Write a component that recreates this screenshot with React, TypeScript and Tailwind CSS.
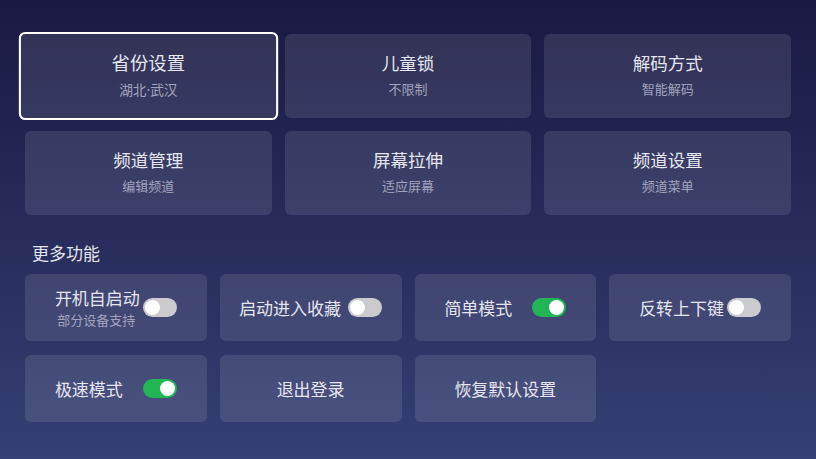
const topCards = [
  { title: "省份设置", sub: ["湖北", "武汉"], active: true },
  { title: "儿童锁", sub: ["不限制"] },
  { title: "解码方式", sub: ["智能解码"] },
  { title: "频道管理", sub: ["编辑频道"] },
  { title: "屏幕拉伸", sub: ["适应屏幕"] },
  { title: "频道设置", sub: ["频道菜单"] },
];

type Extra = {
  label: string;
  sub?: string;
  toggle?: boolean;
  on?: boolean;
  gap?: string;
};

const extras: Extra[] = [
  { label: "开机自启动", sub: "部分设备支持", toggle: true, on: false, gap: "ml-[2px]" },
  { label: "启动进入收藏", toggle: true, on: false, gap: "ml-[7px]" },
  { label: "简单模式", toggle: true, on: true, gap: "ml-[2px]" },
  { label: "反转上下键", toggle: true, on: false, gap: "ml-[2px]" },
  { label: "极速模式", toggle: true, on: true, gap: "ml-[2px]" },
  { label: "退出登录" },
  { label: "恢复默认设置" },
];

function Toggle({ on }: { on?: boolean }) {
  return (
    <span
      className={
        on
          ? "flex h-[19px] w-[34px] shrink-0 items-center justify-end rounded-full bg-[#22b553] px-[2px]"
          : "flex h-[19px] w-[34px] shrink-0 items-center justify-start rounded-full bg-[#cbcbcf] px-[2px]"
      }
    >
      <span className="h-[15px] w-[15px] rounded-full bg-white" />
    </span>
  );
}

export default function App() {
  return (
    <div
      className="min-h-screen w-full bg-gradient-to-b from-[#1a1942] to-[#354073] px-[25px] pb-[37px] pt-[34px] text-[#e4e4ee]"
      style={{ fontFamily: '"Noto Sans CJK SC", "Noto Sans", sans-serif' }}
    >
      <div className="grid grid-cols-3 gap-x-[13px] gap-y-[13px]">
        {topCards.map((c) => (
          <div
            key={c.title}
            className={
              c.active
                ? "flex h-[84px] scale-[1.05] flex-col items-center justify-center rounded-md border-2 border-white bg-white/10 pb-[3px]"
                : "flex h-[84px] flex-col items-center justify-center rounded-md bg-white/10 pb-[3px]"
            }
          >
            <span className="text-[17.5px] leading-[24px] text-[#e6e6f0]">{c.title}</span>
            <span className="mt-[5px] text-[13px] leading-[18px] text-[#a2a3bd]">
              {c.sub[0]}
              {c.sub[1] && (
                <>
                  <span style={{ fontFamily: '"Noto Sans", sans-serif' }}>·</span>
                  {c.sub[1]}
                </>
              )}
            </span>
          </div>
        ))}
      </div>

      <p className="mb-[9px] mt-[26px] pl-[7px] text-[17px] leading-[24px] text-[#e4e4ee]">更多功能</p>

      <div className="grid grid-cols-4 gap-x-[13px] gap-y-[14px]">
        {extras.map((e) => (
          <div
            key={e.label}
            className="flex h-[67px] items-center justify-center rounded-md bg-white/10"
          >
            {e.toggle ? (
              <>
                <div className="flex min-w-[86px] flex-col items-start">
                  <span className="text-[17px] leading-[24px] text-[#e6e6f0]">{e.label}</span>
                  {e.sub && (
                    <span className="self-center pr-[3px] text-[13px] leading-[20px] text-[#a2a3bd]">
                      {e.sub}
                    </span>
                  )}
                </div>
                <span className={e.gap}>
                  <Toggle on={e.on} />
                </span>
              </>
            ) : (
              <span className="text-[17px] leading-[22px] text-[#e6e6f0]">{e.label}</span>
            )}
          </div>
        ))}
      </div>
    </div>
  );
}
